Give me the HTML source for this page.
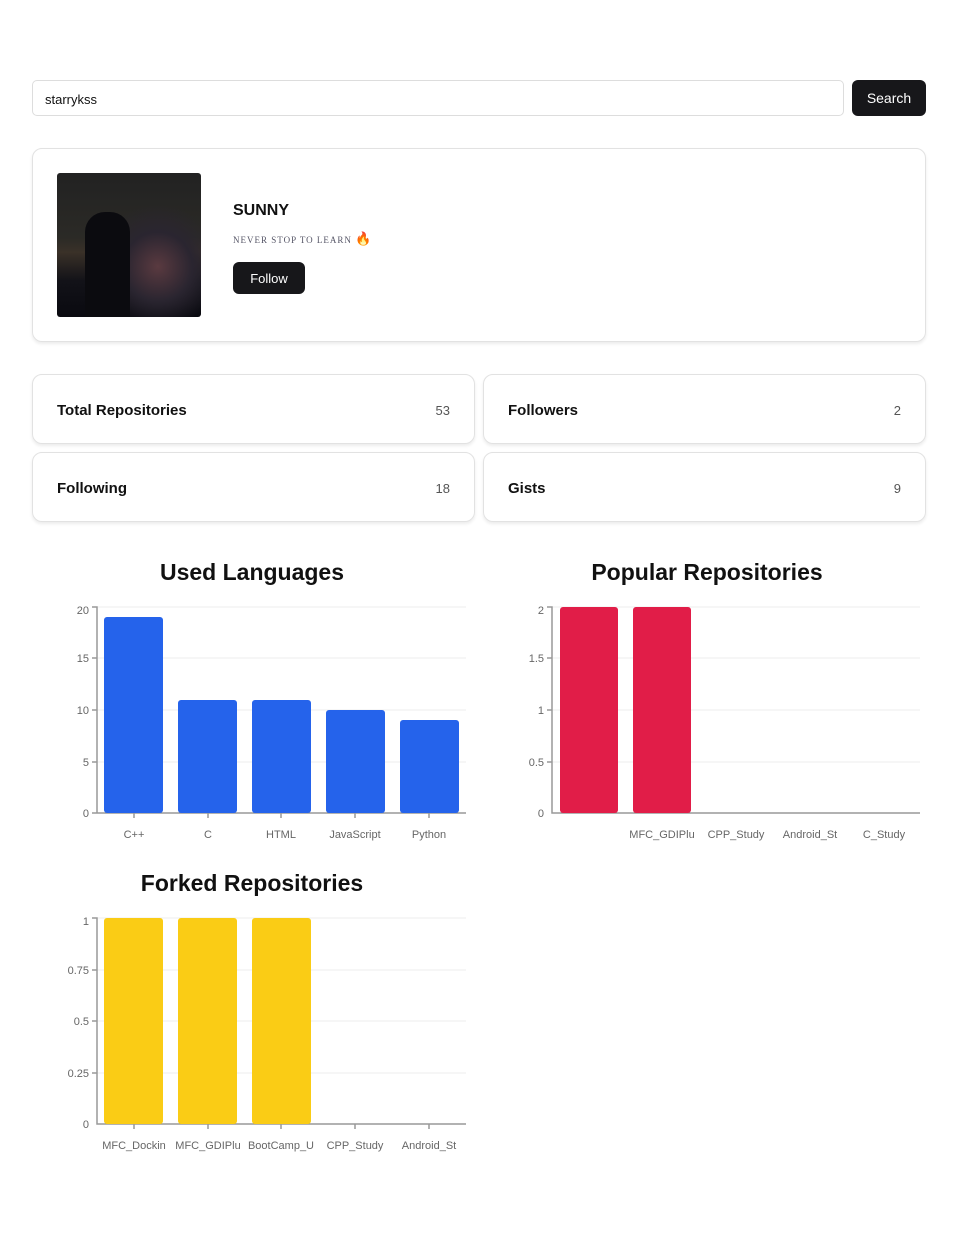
<!DOCTYPE html>
<html><head><meta charset="utf-8"><style>
*{box-sizing:border-box;margin:0;padding:0}
body{width:958px;height:1240px;background:#fff;font-family:"Liberation Sans","DejaVu Sans",sans-serif;position:relative;overflow:hidden;color:#111}
.abs{position:absolute}
.input{left:32px;top:80px;width:812px;height:36px;border:1px solid #ddd;border-radius:5px;font-size:13px;padding:11px 12px}
.btn{background:#17171a;color:#fff;border-radius:6px;display:flex;align-items:center;justify-content:center}
.card{border:1px solid #e2e2e2;border-radius:10px;box-shadow:0 2px 3px rgba(0,0,0,.08)}
.stat{display:flex;justify-content:space-between;align-items:center;padding:2px 24px 0;font-size:15px;font-weight:bold}
.stat span{font-weight:normal;font-size:13px;color:#555}
svg text{font-family:"Liberation Sans","DejaVu Sans",sans-serif}
</style></head><body>
<div class="abs input">starrykss</div>
<div class="abs btn" style="left:852px;top:80px;width:74px;height:36px;font-size:14px">Search</div>
<div class="abs card" style="left:32px;top:148px;width:894px;height:194px"></div>
<div class="abs" style="left:57px;top:173px;width:144px;height:144px;border-radius:3px;background:radial-gradient(circle at 70% 65%,#5a3a40 0,#2a2530 25%,transparent 45%),linear-gradient(#222 0,#2b2a26 45%,#3a3128 55%,#121218 75%,#0a0a10 100%)"></div>
<div class="abs" style="left:85px;top:212px;width:45px;height:105px;background:#0b0b0f;border-radius:20px 20px 0 0"></div>
<div class="abs" style="left:233px;top:202px;font-size:16px;font-weight:bold">SUNNY</div>
<div class="abs" style="left:233px;top:231px;font-size:9px;font-family:'Liberation Serif',serif;letter-spacing:1px;color:#556">NEVER STOP TO LEARN <span style="color:#f07d1c;font-size:13px">🔥</span></div>
<div class="abs btn" style="left:233px;top:262px;width:72px;height:32px;font-size:13px">Follow</div>
<div class="abs card stat" style="left:32px;top:374px;width:443px;height:70px">Total Repositories<span>53</span></div>
<div class="abs card stat" style="left:483px;top:374px;width:443px;height:70px">Followers<span>2</span></div>
<div class="abs card stat" style="left:32px;top:452px;width:443px;height:70px">Following<span>18</span></div>
<div class="abs card stat" style="left:483px;top:452px;width:443px;height:70px">Gists<span>9</span></div>
<svg class="abs" style="left:0;top:0" width="958" height="1240">
<g font-size="23" font-weight="bold" text-anchor="middle" fill="#111">
<text x="252" y="580">Used Languages</text><text x="707" y="580">Popular Repositories</text><text x="252" y="891">Forked Repositories</text></g>
<g stroke="#eee"><path d="M97 607H466M97 658H466M97 710H466M97 762H466M552 607H920M552 658H920M552 710H920M552 762H920M97 918H466M97 970H466M97 1021H466M97 1073H466"/></g>
<g stroke="#999" stroke-width="1.5" fill="none">
<path d="M92 607H97V813H466M92 658H97M92 710H97M92 762H97M92 813H97M134 813v5M208 813v5M281 813v5M355 813v5M429 813v5"/>
<path d="M547 607H552V813H920M547 658H552M547 710H552M547 762H552"/>
<path d="M92 918H97V1124H466M92 970H97M92 1021H97M92 1073H97M134 1124v5M208 1124v5M281 1124v5M355 1124v5M429 1124v5"/></g>
<g fill="#2563eb"><rect x="104" y="617" width="59" height="196" rx="3"/><rect x="178" y="700" width="59" height="113" rx="3"/><rect x="252" y="700" width="59" height="113" rx="3"/><rect x="326" y="710" width="59" height="103" rx="3"/><rect x="400" y="720" width="59" height="93" rx="3"/></g>
<g fill="#e11d48"><rect x="560" y="607" width="58" height="206" rx="3"/><rect x="633" y="607" width="58" height="206" rx="3"/></g>
<g fill="#facc15"><rect x="104" y="918" width="59" height="206" rx="3"/><rect x="178" y="918" width="59" height="206" rx="3"/><rect x="252" y="918" width="59" height="206" rx="3"/></g>
<g font-size="11" fill="#666" text-anchor="end">
<text x="89" y="614">20</text><text x="89" y="662">15</text><text x="89" y="714">10</text><text x="89" y="766">5</text><text x="89" y="817">0</text>
<text x="544" y="614">2</text><text x="544" y="662">1.5</text><text x="544" y="714">1</text><text x="544" y="766">0.5</text><text x="544" y="817">0</text>
<text x="89" y="925">1</text><text x="89" y="974">0.75</text><text x="89" y="1025">0.5</text><text x="89" y="1077">0.25</text><text x="89" y="1128">0</text></g>
<g font-size="11" fill="#666" text-anchor="middle">
<text x="134" y="838">C++</text><text x="208" y="838">C</text><text x="281" y="838">HTML</text><text x="355" y="838">JavaScript</text><text x="429" y="838">Python</text>
<text x="662" y="838">MFC_GDIPlu</text><text x="736" y="838">CPP_Study</text><text x="810" y="838">Android_St</text><text x="884" y="838">C_Study</text>
<text x="134" y="1149">MFC_Dockin</text><text x="208" y="1149">MFC_GDIPlu</text><text x="281" y="1149">BootCamp_U</text><text x="355" y="1149">CPP_Study</text><text x="429" y="1149">Android_St</text></g>
</svg>
</body></html>
